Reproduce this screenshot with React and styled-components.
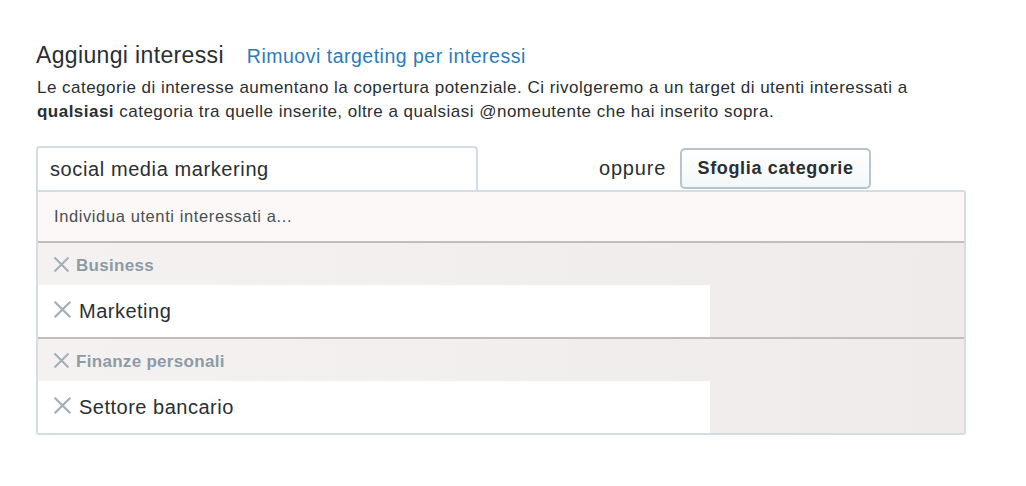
import styled, { createGlobalStyle } from 'styled-components'

const Global = createGlobalStyle`
  body {
    margin: 0;
    background: #fff;
    font-family: "Liberation Sans", Arial, sans-serif;
    color: #292f33;
  }
`

const Page = styled.div`
  padding: 40px 0 0 36px;
  width: 930px;
`

const TitleRow = styled.div`
  display: flex;
  align-items: baseline;
  gap: 23px;
`

const Title = styled.h2`
  margin: 0;
  font-size: 23px;
  letter-spacing: .35px;
  font-weight: normal;
  color: #292f33;
  line-height: 30px;
`

const TitleLink = styled.a`
  font-size: 19.5px;
  letter-spacing: .5px;
  color: #2b7bb9;
  text-decoration: none;
  cursor: pointer;
`

const Desc = styled.p`
  margin: 6px 0 0 1px;
  font-size: 17px;
  letter-spacing: .48px;
  line-height: 24px;
  white-space: nowrap;
  color: #292f33;
  b { font-weight: bold; }
`

const SearchRow = styled.div`
  display: flex;
  align-items: flex-end;
  margin-top: 22px;
`

const Input = styled.input`
  box-sizing: border-box;
  width: 442px;
  height: 44px;
  border: 2px solid #d3dde4;
  border-bottom: none;
  border-radius: 4px 4px 0 0;
  padding: 0 12px;
  font-family: inherit;
  font-size: 20px;
  letter-spacing: .6px;
  color: #292f33;
  outline: none;
`

const OrLabel = styled.span`
  align-self: center;
  margin-left: 121px;
  font-size: 20px;
  letter-spacing: .8px;
  color: #292f33;
`

const Button = styled.button`
  margin: 0 0 1px 14px;
  box-sizing: border-box;
  width: 191px;
  height: 41px;
  border: 2px solid #b7c4cd;
  border-radius: 5px;
  background: linear-gradient(#fff, #f4f7f9);
  font-family: inherit;
  font-size: 18px;
  letter-spacing: .65px;
  font-weight: bold;
  color: #292f33;
  cursor: pointer;
`

const Panel = styled.div`
  box-sizing: border-box;
  width: 930px;
  border: 2px solid #d3dde4;
  border-radius: 0 3px 3px 3px;
  background: linear-gradient(90deg, #f5f1f1, #f0ebeb);
`

const PanelHead = styled.div`
  height: 49px;
  display: flex;
  align-items: center;
  padding-left: 16px;
  font-size: 16.5px;
  letter-spacing: .6px;
  color: #4a4f52;
  background: #fbf8f7;
  border-bottom: 2px solid #c2bcbb;
`

const Group = styled.div`
  & + & {
    border-top: 2px solid #c2bcbb;
  }
`

const GroupHead = styled.div`
  box-sizing: border-box;
  height: 42px;
  display: flex;
  align-items: center;
  gap: 6px;
  padding: 4px 0 0 15px;
  font-size: 17px;
  letter-spacing: .3px;
  font-weight: bold;
  color: #8c9ba6;
`

const Item = styled.div`
  width: 672px;
  height: 52px;
  display: flex;
  align-items: center;
  gap: 7px;
  padding-left: 15px;
  box-sizing: border-box;
  background: #fff;
  font-size: 20px;
  letter-spacing: .5px;
  color: #292f33;
`

const X = ({ size = 17 }) => (
  <svg width={size} height={size} viewBox="0 0 17 17" style={{ flex: 'none', marginTop: -3 }}>
    <path d="M1.5 1.5 L15.5 15.5 M15.5 1.5 L1.5 15.5" stroke="#a2afb9" strokeWidth="2" fill="none" />
  </svg>
)

const groups = [
  { name: 'Business', items: ['Marketing'] },
  { name: 'Finanze personali', items: ['Settore bancario'] },
]

export default function App() {
  return (<>
    <Global />
    <Page>
      <TitleRow>
        <Title>Aggiungi interessi</Title>
        <TitleLink>Rimuovi targeting per interessi</TitleLink>
      </TitleRow>
      <Desc>
        Le categorie di interesse aumentano la copertura potenziale. Ci rivolgeremo a un target di utenti interessati a<br />
        <b>qualsiasi</b> categoria tra quelle inserite, oltre a qualsiasi @nomeutente che hai inserito sopra.
      </Desc>
      <SearchRow>
        <Input defaultValue="social media markering" />
        <OrLabel>oppure</OrLabel>
        <Button>Sfoglia categorie</Button>
      </SearchRow>
      <Panel>
        <PanelHead>Individua utenti interessati a...</PanelHead>
        {groups.map(g => (
          <Group key={g.name}>
            <GroupHead><X />{g.name}</GroupHead>
            {g.items.map(it => (
              <Item key={it}><X size={19} />{it}</Item>
            ))}
          </Group>
        ))}
      </Panel>
    </Page>
  </>)
}
